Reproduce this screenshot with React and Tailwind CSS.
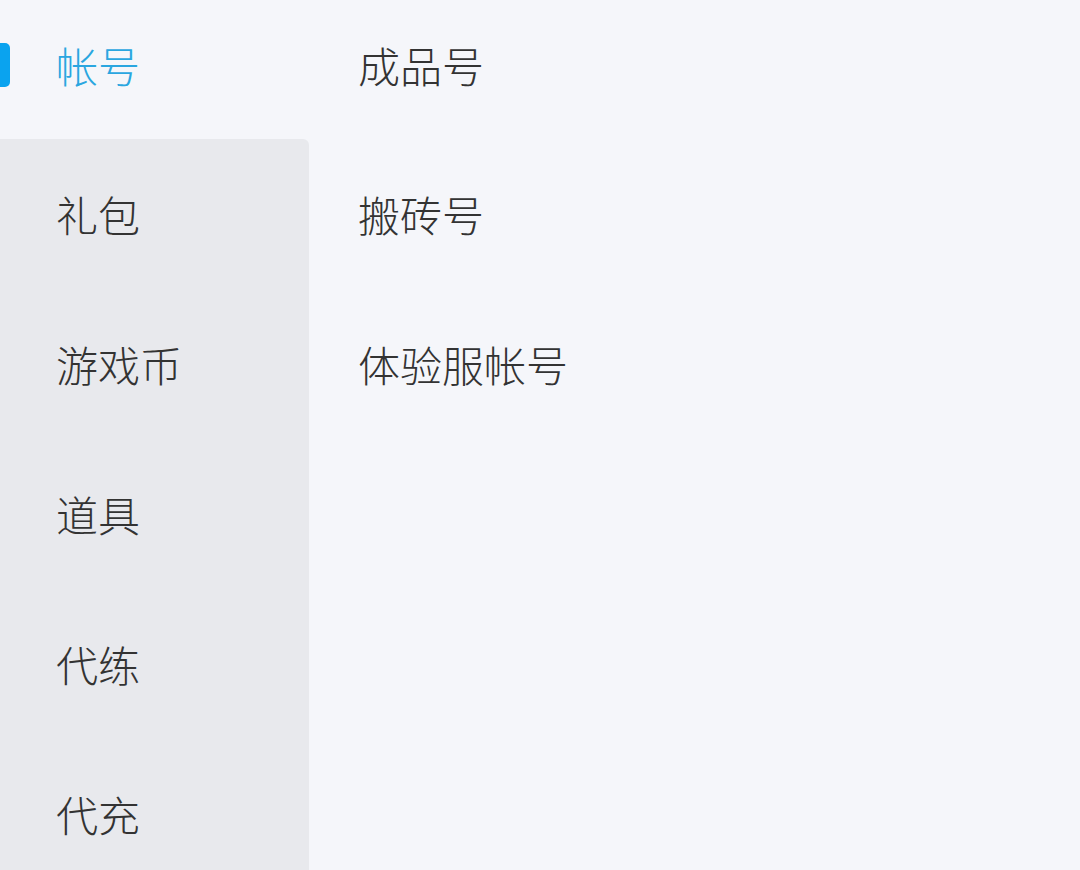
export default function App() {
  const left = ["礼包", "游戏币", "道具", "代练", "代充"];
  const right = ["成品号", "搬砖号", "体验服帐号"];
  const font = { fontFamily: '"Noto Sans CJK SC", "Noto Sans", sans-serif' };
  return (
    <div className="flex h-[870px] w-[1080px] overflow-hidden bg-[#f5f6fa]" style={font}>
      <div className="flex w-[309px] flex-col">
        <div className="relative flex h-[139px] shrink-0 items-center pb-[10px] pl-[56px]">
          <div className="absolute left-0 top-[43px] h-[44px] w-[10px] rounded-r-[5px] bg-[#0aa3ef]"></div>
          <span className="text-[42px] font-light leading-none text-[#2aa6e0]">帐号</span>
        </div>
        <div className="flex flex-1 flex-col rounded-tr-[6px] bg-[#e8e9ed]">
          {left.map((t) => (
            <div key={t} className="flex h-[150px] shrink-0 items-center pl-[56px]">
              <span className="text-[42px] font-light leading-none text-[#333333]">{t}</span>
            </div>
          ))}
        </div>
      </div>
      <div className="flex flex-1 flex-col pl-[49px]">
        {right.map((t, i) => (
          <div key={t} className={(i === 0 ? "h-[139px] pb-[10px]" : "h-[150px]") + " flex shrink-0 items-center"}>
            <span className="text-[42px] font-light leading-none text-[#333333]">{t}</span>
          </div>
        ))}
      </div>
    </div>
  );
}
